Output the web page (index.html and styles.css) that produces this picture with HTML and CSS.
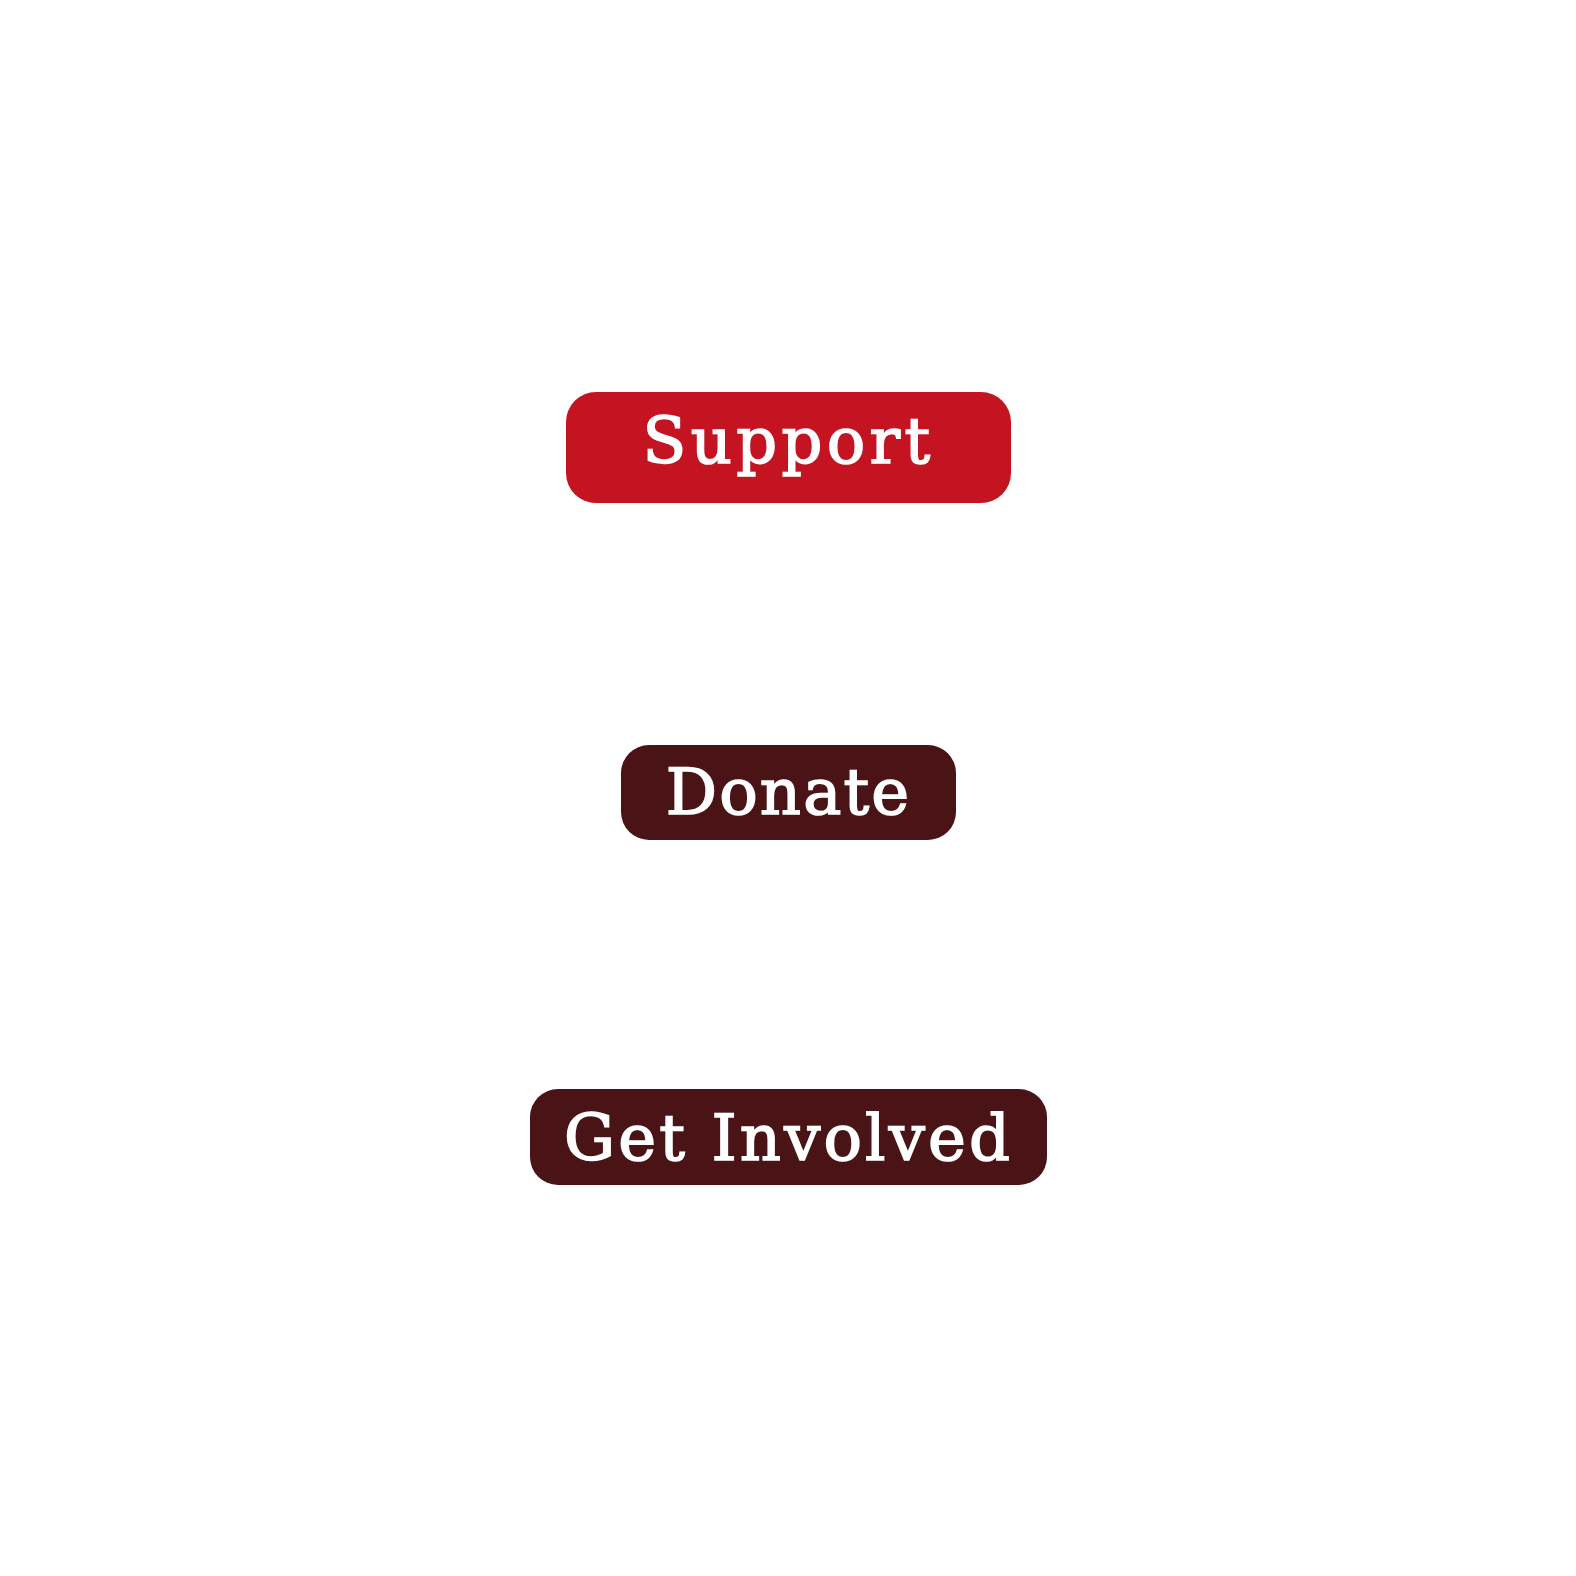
FILE: index.html
```html
<!DOCTYPE html>
<html lang="en">
<head>
<meta charset="utf-8">
<title>Buttons</title>
<link rel="stylesheet" href="styles.css">
</head>
<body>
<main class="stack">
  <a class="btn btn-support" href="#">Support</a>
  <a class="btn btn-donate" href="#">Donate</a>
  <a class="btn btn-involved" href="#">Get Involved</a>
</main>
</body>
</html>
```
FILE: styles.css
```css
html, body {
  margin: 0;
  padding: 0;
  background: #ffffff;
}
.stack {
  height: 1576px;
  display: flex;
  flex-direction: column;
  align-items: center;
  justify-content: center;
  gap: 242px;
  padding-left: 1px;
  box-sizing: border-box;
}
.btn {
  display: flex;
  align-items: center;
  justify-content: center;
  box-sizing: border-box;
  color: #ffffff;
  text-decoration: none;
  font-family: "DejaVu Serif", serif;
  font-weight: 400;
  font-size: 64px;
  line-height: 1;
  -webkit-text-stroke: 1.6px #ffffff;
}
.btn-support {
  width: 445px;
  height: 111px;
  border-radius: 30px;
  background: #c41422;
  letter-spacing: 4.3px;
  padding-bottom: 13px;
}
.btn-donate {
  width: 335px;
  height: 95px;
  border-radius: 28px;
  background: #4a1416;
  letter-spacing: 2.1px;
  padding-bottom: 1px;
}
.btn-involved {
  width: 517px;
  height: 96px;
  border-radius: 28px;
  background: #4a1416;
  letter-spacing: 3.1px;
  padding-top: 2px;
  margin-top: 7px;
}
```
